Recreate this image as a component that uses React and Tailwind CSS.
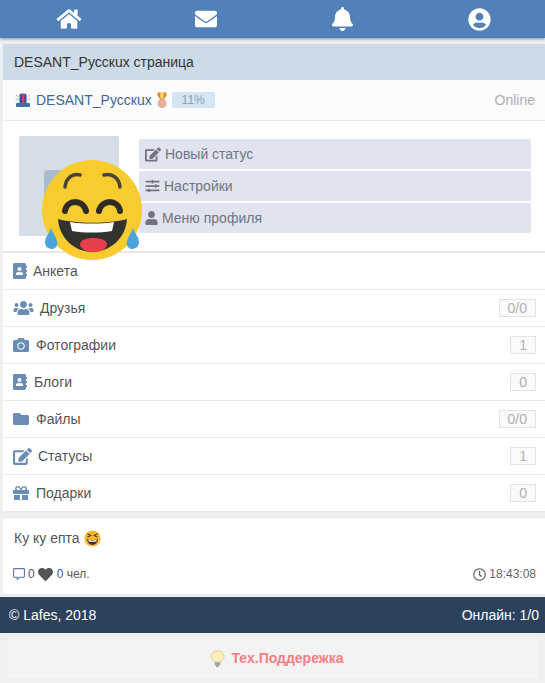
import React from 'react';
import {
  FaHome, FaEnvelope, FaBell, FaUserCircle, FaEdit, FaSlidersH, FaUser,
  FaAddressBook, FaUsers, FaCamera, FaFolder, FaGift, FaHeart, FaRegClock, FaRegCommentAlt,
} from 'react-icons/fa';

function JoyEmoji({ className }) {
  return (
    <svg viewBox="0 0 100 100" className={className}>
      <circle cx="50" cy="50" r="50" fill="#f8cb2e" />
      <path d="M23 27 C24 17 32 13 38 15" fill="none" stroke="#4a4436" strokeWidth="3.5" strokeLinecap="round" />
      <path d="M78 27 C77 17 69 13 62 15" fill="none" stroke="#4a4436" strokeWidth="3.5" strokeLinecap="round" />
      <path d="M23 51 C25 39 41 39 44 51" fill="none" stroke="#2f2c26" strokeWidth="6" strokeLinecap="round" />
      <path d="M57 51 C60 39 76 39 78 51" fill="none" stroke="#2f2c26" strokeWidth="6" strokeLinecap="round" />
      <path d="M16 59 C35 64 66 64 85 59 C84 78 68 92 50 92 C33 92 17 78 16 59 Z" fill="#33322f" />
      <path d="M28 62 C40 64 60 64 72 62 L70 71 C58 73 42 73 30 71 Z" fill="#ffffff" />
      <path d="M38 84 C39 76 64 76 65 84 C64 95 39 95 38 84 Z" fill="#e8404a" />
      <path d="M9 68 C7 74 3 77 3 82 C3 87 7 89 10 89 C14 89 16 85 15 81 C14 77 11 73 9 68 Z" fill="#4da3dc" />
      <path d="M91 68 C93 74 97 77 97 82 C97 87 93 89 90 89 C86 89 84 85 85 81 C86 77 89 73 91 68 Z" fill="#4da3dc" />
    </svg>
  );
}

function SmallLaugh({ className }) {
  return (
    <svg viewBox="0 0 20 20" className={className}>
      <circle cx="10" cy="10" r="9.5" fill="#f7b731" />
      <path d="M4 4.5 L8 6.5 L4 8.5" fill="none" stroke="#5a3d12" strokeWidth="1.3" />
      <path d="M16 4.5 L12 6.5 L16 8.5" fill="none" stroke="#5a3d12" strokeWidth="1.3" />
      <path d="M3.5 10.5 C7 12 13 12 16.5 10.5 C16 15 13 17.5 10 17.5 C7 17.5 4 15 3.5 10.5 Z" fill="#4a3210" />
      <path d="M5 11.5 C8 12.5 12 12.5 15 11.5 L14.5 13.5 C12 14 8 14 5.5 13.5 Z" fill="#ffffff" />
    </svg>
  );
}

function Beacon({ className }) {
  return (
    <svg viewBox="0 0 16 16" className={className}>
      <path d="M4.5 3 C4.5 1 11.5 1 11.5 3 L11.5 11 L4.5 11 Z" fill="#3349a8" />
      <path d="M7 2 L9.5 2 L9.5 11 L7 11 Z" fill="#d9434e" />
      <rect x="1" y="11" width="14" height="4" rx="1" fill="#3f6ea3" />
      <path d="M1 3 L3.5 5 M0.5 7 L3.5 7.5 M15 3 L12.5 5 M15.5 7 L12.5 7.5" stroke="#e78a8a" strokeWidth="0.8" />
    </svg>
  );
}

function Medal({ className }) {
  return (
    <svg viewBox="0 0 10 16" className={className}>
      <path d="M0.5 0.5 L9.5 0.5 L9.5 3.5 L6.5 8 L3.5 8 L0.5 3.5 Z" fill="#e8862a" />
      <path d="M3.5 0.5 L6.5 0.5 L6.5 6 L5 7.5 L3.5 6 Z" fill="#f6dc7a" />
      <circle cx="5" cy="11.5" r="4" fill="#e9b299" stroke="#c98a72" strokeWidth="0.6" />
    </svg>
  );
}

function Bulb({ className }) {
  return (
    <svg viewBox="0 0 16 18" className={className}>
      <path d="M8 1 C3.5 1 1 4 1 7 C1 9.5 4 10.5 4.8 13 L11.2 13 C12 10.5 15 9.5 15 7 C15 4 12.5 1 8 1 Z" fill="#fbeeb8" stroke="#d9c98a" />
      <rect x="5" y="13" width="6" height="3.5" rx="0.8" fill="#9ea7ad" />
      <rect x="6.5" y="16.5" width="3" height="1.2" fill="#6d767c" />
    </svg>
  );
}

const menu = [
  { label: 'Анкета', Icon: FaAddressBook, size: 'w-[14px] h-[16px]', gap: 'ml-[6px]' },
  { label: 'Друзья', Icon: FaUsers, size: 'w-[21px] h-[16px]', gap: 'ml-[6px]', count: '0/0' },
  { label: 'Фотографии', Icon: FaCamera, size: 'w-[16px] h-[16px]', gap: 'ml-[7px]', count: '1' },
  { label: 'Блоги', Icon: FaAddressBook, size: 'w-[14px] h-[16px]', gap: 'ml-[7px]', count: '0' },
  { label: 'Файлы', Icon: FaFolder, size: 'w-[16px] h-[16px]', gap: 'ml-[7px]', count: '0/0' },
  { label: 'Статусы', Icon: FaEdit, size: 'w-[19px] h-[17px]', gap: 'ml-[6px]', count: '1' },
  { label: 'Подарки', Icon: FaGift, size: 'w-[16px] h-[16px]', gap: 'ml-[7px]', count: '0' },
];

const actions = [
  { label: 'Новый статус', Icon: FaEdit, size: 'w-[16px] h-[15px]', gap: 'ml-[4px]' },
  { label: 'Настройки', Icon: FaSlidersH, size: 'w-[15px] h-[14px]', gap: 'ml-[4px]' },
  { label: 'Меню профиля', Icon: FaUser, size: 'w-[13px] h-[14px]', gap: 'ml-[4px]' },
];

export default function App() {
  return (
    <div className="h-[683px] overflow-hidden bg-[#eeeff1] font-['Liberation_Sans',Arial,sans-serif] text-[14px] text-[#555]">
      {/* Top nav */}
      <div className="grid h-[38px] grid-cols-[repeat(4,137px)] items-center overflow-hidden bg-[#5181b8] text-white shadow-[0_1px_3px_rgba(0,0,0,0.4)]">
        <div className="flex justify-center"><FaHome className="h-[22px] w-[26px]" /></div>
        <div className="flex justify-center"><FaEnvelope className="h-[22px] w-[24px]" /></div>
        <div className="flex justify-center"><FaBell className="h-[24px] w-[21px]" /></div>
        <div className="flex justify-center"><FaUserCircle className="h-[23px] w-[23px]" /></div>
      </div>

      <div className="ml-[3px] mt-[6px]">
        {/* Title */}
        <div className="flex h-[36px] items-center bg-[#cddbe8] pl-[11px] text-[#333]">DESANT_Русскux страница</div>

        {/* User row */}
        <div className="flex h-[41px] items-center border-b border-[#e8e8e8] bg-[#fbfbfb] pl-[12px] pr-[10px]">
          <Beacon className="h-[16px] w-[16px]" />
          <span className="ml-[5px] text-[#3e6795]">DESANT_Русскux</span>
          <Medal className="ml-[5px] h-[16px] w-[10px]" />
          <span className="ml-[5px] flex h-[16px] w-[43px] items-center justify-center rounded-[2px] bg-[#d5e5f1] text-[12px] text-[#8ca2b6]">11%</span>
          <span className="ml-auto text-[#b0b0b0]">Online</span>
        </div>

        {/* Profile */}
        <div className="relative flex h-[132px] border-b-2 border-[#e8e8e8] bg-white pl-[16px] pr-[14px] pt-[15px]">
          <div className="relative h-[100px] w-[100px] shrink-0 rounded-[2px] bg-[#d5dee8]">
            <div className="absolute left-[25px] top-[34px] h-[50px] w-[50px] rounded-[4px] bg-[#a9bccd]" />
          </div>
          <div className="ml-[20px] mt-[3px] flex flex-1 flex-col gap-[2px]">
            {actions.map(({ label, Icon, size, gap }) => (
              <div key={label} className="flex h-[30px] items-center rounded-[2px] bg-[#e1e4ee] pl-[6px] text-[#6f7485]">
                <Icon className={size} />
                <span className={gap}>{label}</span>
              </div>
            ))}
          </div>
          <JoyEmoji className="absolute left-[39px] top-[39px] h-[100px] w-[100px] blur-[0.6px]" />
        </div>

        {/* Menu */}
        <div className="bg-white">
          {menu.map(({ label, Icon, size, gap, count }) => (
            <div key={label} className="flex h-[37px] items-center border-b border-[#e8e8e8] pl-[10px] pr-[9px]">
              <Icon className={`${size} text-[#6a8cb5]`} />
              <span className={gap}>{label}</span>
              {count && (
                <span className="ml-auto flex h-[18px] items-center justify-center border border-[#e3e3e3] bg-[#fafafa] px-[8px] text-[#b0b0b0]">{count}</span>
              )}
            </div>
          ))}
        </div>

        {/* Status */}
        <div className="mt-[5px] flex h-[78px] flex-col border-y border-[#e8e8e8] bg-white pl-[10px] pr-[9px]">
          <div className="mt-[10px] flex items-center">
            <span className="ml-[1px]">Ку ку епта</span>
            <SmallLaugh className="ml-[4px] h-[17px] w-[17px]" />
          </div>
          <div className="mt-auto mb-[11px] flex items-center text-[12px]">
            <FaRegCommentAlt className="h-[12px] w-[12px] text-[#5f7d9e]" />
            <span className="ml-[3px]">0</span>
            <FaHeart className="ml-[3px] h-[15px] w-[15px] text-[#555]" />
            <span className="ml-[4px]">0 чел.</span>
            <span className="ml-auto flex items-center text-[#666]">
              <FaRegClock className="mr-[3px] h-[13px] w-[13px]" />
              18:43:08
            </span>
          </div>
        </div>
      </div>

      {/* Footer */}
      <div className="mt-[2px] flex h-[36px] items-center justify-between bg-[#2c415c] pl-[9px] pr-[6px] text-white">
        <span>© Lafes, 2018</span>
        <span>Онлайн: 1/0</span>
      </div>
      <div className="mx-[6px] mt-[5px] flex h-[41px] items-center justify-center border border-[#eeeeee] bg-[#f3f3f4] pl-[8px] font-bold text-[#f47f85]">
        <Bulb className="h-[17px] w-[15px]" />
        <span className="ml-[7px] text-[14px]">Тех.Поддережка</span>
      </div>
    </div>
  );
}
